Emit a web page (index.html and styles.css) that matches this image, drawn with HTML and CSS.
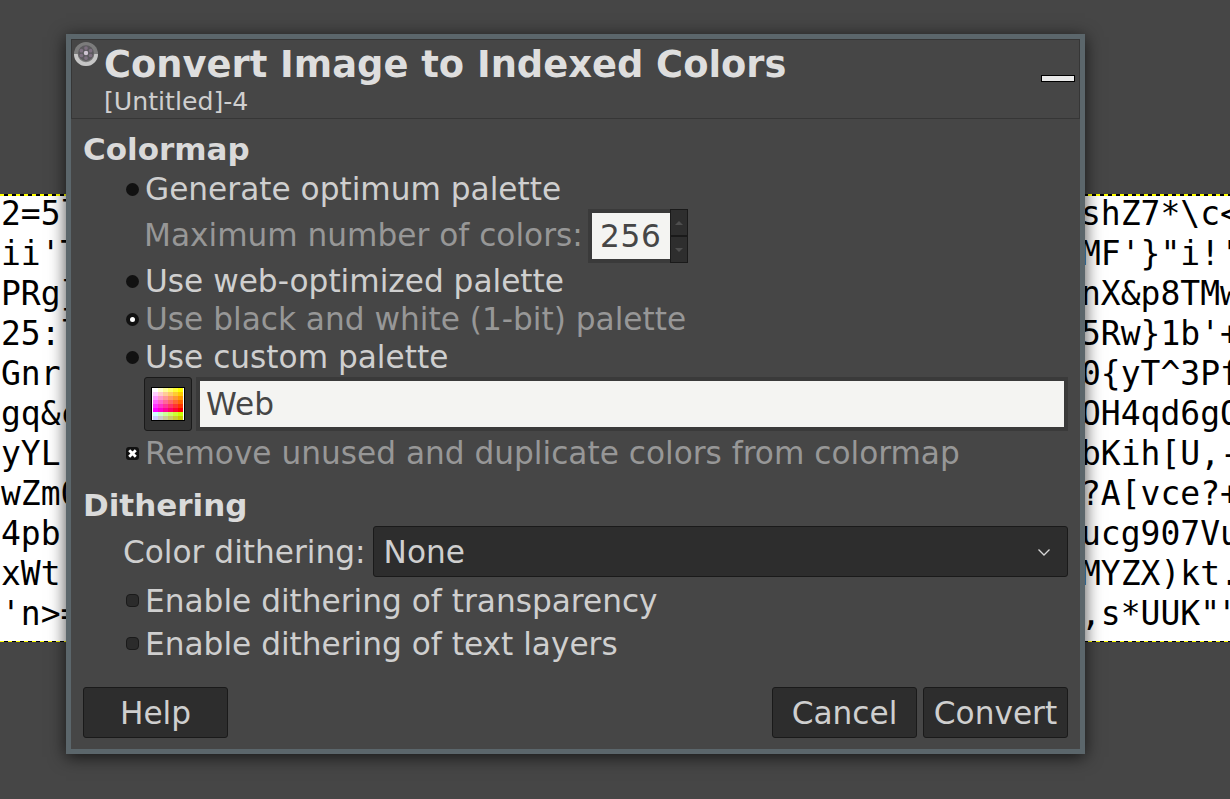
FILE: index.html
```html
<!DOCTYPE html>
<html lang="en">
<head>
    <meta charset="UTF-8">
    <title>Convert Image to Indexed Colors</title>
    <link rel="stylesheet" href="styles.css">
</head>
<body>
    <div class="canvas">
        <pre class="canvas-text canvas-left">2=5l
ii'T
PRg}
25:l
Gnr
gq&amp;c
yYL
wZm0
4pb
xWt
'n&gt;=</pre>
        <pre class="canvas-text canvas-right">shZ7*\c&lt;
MF'}"i!'
nX&amp;p8TMw
5Rw}1b'+
0{yT^3Pf
OH4qd6gO
bKih[U,-
?A[vce?+
ucg907Vu
MYZX)kt.
,s*UUK""</pre>
    </div>

    <div class="dialog">
        <div class="dialog-header">
            <svg class="gimp-icon" width="24" height="24" viewBox="0 0 26 26">
                <circle cx="13" cy="13" r="13" fill="#7c7c7c"/>
                <path d="M0 13a13 13 0 0 0 26 0h-4a9 9 0 0 1-18 0z" fill="#c6c6c6"/>
                <circle cx="13" cy="12" r="8.500" fill="#5c5a5e"/>
                <circle cx="13" cy="12" r="2.400" fill="#cfc4d2"/>
                <circle cx="13" cy="6.600" r="2" fill="#7d6f80"/>
                <circle cx="13" cy="17.400" r="2" fill="#7d6f80"/>
                <circle cx="8" cy="9.400" r="2" fill="#7d6f80"/>
                <circle cx="18" cy="9.400" r="2" fill="#7d6f80"/>
                <circle cx="8" cy="14.600" r="2" fill="#7d6f80"/>
                <circle cx="18" cy="14.600" r="2" fill="#7d6f80"/>
            </svg>
            <div class="header-text">
                <div class="dialog-title">Convert Image to Indexed Colors</div>
                <div class="dialog-subtitle">[Untitled]-4</div>
            </div>
            <div class="minimize"></div>
        </div>

        <div class="dialog-body">
            <h3 class="section-title">Colormap</h3>
            <div class="option option-first"><span class="radio"></span>Generate optimum palette</div>
            <div class="max-row">
                <span class="dim">Maximum number of colors:</span>
                <div class="spin">
                    <div class="spin-value">256</div>
                    <div class="spin-buttons">
                        <div class="spin-btn"><span class="arrow-up"></span></div>
                        <div class="spin-btn"><span class="arrow-down"></span></div>
                    </div>
                </div>
            </div>
            <div class="option"><span class="radio"></span>Use web-optimized palette</div>
            <div class="option dim"><span class="radio radio-on"></span>Use black and white (1-bit) palette</div>
            <div class="option"><span class="radio"></span>Use custom palette</div>
            <div class="palette-row">
                <div class="palette-btn">
                    <svg width="34" height="34" viewBox="0 0 34 34" shape-rendering="crispEdges">
                        <rect width="34" height="34" fill="#000"/>
                        <rect x="1" y="1" width="32" height="32" fill="#fff"/>
                        <g>
                            <rect x="2" y="1" width="5" height="4" fill="#ffffff"/><rect x="7" y="1" width="5" height="4" fill="#ffffcc"/><rect x="12" y="1" width="5" height="4" fill="#ffff99"/><rect x="17" y="1" width="5" height="4" fill="#ffff66"/><rect x="22" y="1" width="5" height="4" fill="#ffff33"/><rect x="27" y="1" width="5" height="4" fill="#ffff00"/>
                            <rect x="2" y="5" width="5" height="4" fill="#ffccff"/><rect x="7" y="5" width="5" height="4" fill="#ffcccc"/><rect x="12" y="5" width="5" height="4" fill="#ffcc99"/><rect x="17" y="5" width="5" height="4" fill="#ffcc66"/><rect x="22" y="5" width="5" height="4" fill="#ffcc33"/><rect x="27" y="5" width="5" height="4" fill="#ffcc00"/>
                            <rect x="2" y="9" width="5" height="4" fill="#ff99ff"/><rect x="7" y="9" width="5" height="4" fill="#ff99cc"/><rect x="12" y="9" width="5" height="4" fill="#ff9999"/><rect x="17" y="9" width="5" height="4" fill="#ff9966"/><rect x="22" y="9" width="5" height="4" fill="#ff9933"/><rect x="27" y="9" width="5" height="4" fill="#ff9900"/>
                            <rect x="2" y="13" width="5" height="4" fill="#ff66ff"/><rect x="7" y="13" width="5" height="4" fill="#ff66cc"/><rect x="12" y="13" width="5" height="4" fill="#ff6699"/><rect x="17" y="13" width="5" height="4" fill="#ff6666"/><rect x="22" y="13" width="5" height="4" fill="#ff6633"/><rect x="27" y="13" width="5" height="4" fill="#ff6600"/>
                            <rect x="2" y="17" width="5" height="4" fill="#ff33ff"/><rect x="7" y="17" width="5" height="4" fill="#ff33cc"/><rect x="12" y="17" width="5" height="4" fill="#ff3399"/><rect x="17" y="17" width="5" height="4" fill="#ff3366"/><rect x="22" y="17" width="5" height="4" fill="#ff3333"/><rect x="27" y="17" width="5" height="4" fill="#ff3300"/>
                            <rect x="2" y="21" width="5" height="4" fill="#ff00ff"/><rect x="7" y="21" width="5" height="4" fill="#ff00cc"/><rect x="12" y="21" width="5" height="4" fill="#ff0099"/><rect x="17" y="21" width="5" height="4" fill="#ff0066"/><rect x="22" y="21" width="5" height="4" fill="#ff0033"/><rect x="27" y="21" width="5" height="4" fill="#ff0000"/>
                            <rect x="2" y="25" width="5" height="4" fill="#ccffff"/><rect x="7" y="25" width="5" height="4" fill="#ccffcc"/><rect x="12" y="25" width="5" height="4" fill="#ccff99"/><rect x="17" y="25" width="5" height="4" fill="#ccff66"/><rect x="22" y="25" width="5" height="4" fill="#ccff33"/><rect x="27" y="25" width="5" height="4" fill="#ccff00"/>
                            <rect x="2" y="29" width="5" height="4" fill="#ccccff"/><rect x="7" y="29" width="5" height="4" fill="#cccccc"/><rect x="12" y="29" width="5" height="4" fill="#cccc99"/><rect x="17" y="29" width="5" height="4" fill="#cccc66"/><rect x="22" y="29" width="5" height="4" fill="#cccc33"/><rect x="27" y="29" width="5" height="4" fill="#cccc00"/>
                        </g>
                    </svg>
                </div>
                <div class="palette-entry"><div class="palette-input">Web</div></div>
            </div>
            <div class="option dim"><span class="check check-on"><svg width="11" height="11" viewBox="0 0 10 10"><path d="M2 2l6 6M8 2l-6 6" stroke="#fff" stroke-width="2.600"/></svg></span>Remove unused and duplicate colors from colormap</div>

            <h3 class="section-title section-second">Dithering</h3>
            <div class="dither-row">
                <span>Color dithering:</span>
                <div class="combo">
                    <span>None</span>
                    <svg width="14" height="14" viewBox="0 0 14 14"><path d="M1.500 4.500l5.500 5.500 5.500-5.500" fill="none" stroke="#d6d6d6" stroke-width="1.300"/></svg>
                </div>
            </div>
            <div class="option option-check"><span class="check"></span>Enable dithering of transparency</div>
            <div class="option option-check"><span class="check"></span>Enable dithering of text layers</div>
        </div>

        <div class="dialog-actions">
            <button class="btn">Help</button>
            <div class="actions-right">
                <button class="btn">Cancel</button>
                <button class="btn">Convert</button>
            </div>
        </div>
    </div>
</body>
</html>
```

FILE: styles.css
```css
html, body {
    height: 100%;
}

body {
    margin: 0;
    overflow: hidden;
    background-color: #464646;
    font-family: "DejaVu Sans", sans-serif;
    font-size: 31.200px;
    color: #cfcfcf;
}

.canvas {
    display: flex;
    justify-content: space-between;
    height: 448px;
    margin-top: 194px;
    background-color: #fff;
    background-image:
        repeating-linear-gradient(90deg, #ff0 0 4px, #000 4px 8px),
        repeating-linear-gradient(90deg, #ff0 0 4px, #000 4px 8px);
    background-size: 100% 2px, 100% 1px;
    background-position: top, bottom;
    background-repeat: no-repeat;
}

.canvas-text {
    margin: 0;
    font-family: "DejaVu Sans Mono", monospace;
    font-size: 33px;
    line-height: 40px;
    color: #000;
}

.canvas-left {
    width: 64px;
    padding-left: 1px;
}

.canvas-right {
    width: 149px;
}

.dialog {
    position: absolute;
    left: 66px;
    top: 34px;
    width: 1019px;
    height: 720px;
    box-sizing: border-box;
    border: 5px solid #5b666b;
    background-color: #464646;
    box-shadow: 0 3px 16px rgba(0, 0, 0, 0.7);
    display: flex;
    flex-direction: column;
}

.dialog-header {
    position: relative;
    height: 80px;
    box-sizing: border-box;
    border: 1px solid #363636;
    padding-left: 32px;
}

.gimp-icon {
    position: absolute;
    left: 2px;
    top: 2px;
}

.dialog-title {
    font-weight: bold;
    font-size: 36.850px;
    line-height: 42px;
    margin-top: 4px;
    color: #dedede;
}

.dialog-subtitle {
    font-size: 25.200px;
    line-height: 32px;
    color: #cfcfcf;
}

.minimize {
    position: absolute;
    right: 4px;
    top: 35px;
    width: 32px;
    height: 5px;
    background-color: #e8e8e8;
    border: 1px solid #000;
}

.dialog-body {
    flex: 1;
    padding: 12px 12px 0 12px;
}

.section-title {
    margin: 0;
    font-size: 31px;
    line-height: 36px;
    font-weight: bold;
    color: #dadada;
}

.section-second {
    margin-top: 15px;
}

.option {
    display: flex;
    align-items: center;
    height: 38px;
    padding-left: 43px;
    white-space: nowrap;
}

.option-first {
    margin-top: 3px;
}

.option-check {
    height: 43px;
}

.dim {
    color: #979797;
}

.radio {
    width: 13px;
    height: 13px;
    margin-right: 6px;
    border-radius: 50%;
    background-color: #111;
    display: flex;
    align-items: center;
    justify-content: center;
}

.radio-on::after {
    content: "";
    width: 5px;
    height: 5px;
    border-radius: 50%;
    background-color: #fff;
}

.check {
    width: 13px;
    height: 13px;
    margin-right: 6px;
    box-sizing: border-box;
    border: 1px solid #1a1a1a;
    border-radius: 4px;
    background-color: #2b2b2b;
    display: flex;
    align-items: center;
    justify-content: center;
}

.check-on {
    border: 0;
    border-radius: 3px;
    background-color: #111;
}

.max-row {
    display: flex;
    align-items: center;
    height: 54px;
    padding-left: 61px;
    white-space: nowrap;
    gap: 5px;
}

.spin {
    display: flex;
    margin-top: 2px;
}

.spin-value {
    width: 78px;
    height: 46px;
    border: 4px solid #3a3a3a;
    border-right: 0;
    background-color: #f4f4f2;
    color: #464646;
    line-height: 46px;
    text-align: center;
    letter-spacing: 0.700px;
}

.spin-buttons {
    display: flex;
    flex-direction: column;
}

.spin-btn {
    width: 18px;
    height: 27px;
    box-sizing: border-box;
    border: 1px solid #1a1a1a;
    background-color: #2e2e2e;
    display: flex;
    align-items: center;
    justify-content: center;
}

.arrow-up {
    border-left: 4px solid transparent;
    border-right: 4px solid transparent;
    border-bottom: 4px solid #4e4e4e;
}

.arrow-down {
    border-left: 4px solid transparent;
    border-right: 4px solid transparent;
    border-top: 4px solid #4e4e4e;
}

.palette-row {
    display: flex;
    align-items: flex-start;
    gap: 4px;
    padding-left: 61px;
    padding-top: 1px;
    height: 57px;
}

.palette-btn {
    width: 48px;
    height: 54px;
    box-sizing: border-box;
    border: 1px solid #1a1a1a;
    border-radius: 3px;
    background-color: #333;
    display: flex;
    align-items: center;
    justify-content: center;
}

.palette-btn svg {
    display: block;
}

.palette-entry {
    flex: 1;
    border: 4px solid #3a3a3a;
}

.palette-input {
    height: 46px;
    line-height: 46px;
    padding-left: 6px;
    background-color: #f4f4f2;
    color: #464646;
}

.dither-row {
    display: flex;
    align-items: center;
    gap: 7px;
    padding-left: 40px;
    margin-top: 3px;
    margin-bottom: 2px;
    white-space: nowrap;
}

.combo {
    flex: 1;
    height: 51px;
    box-sizing: border-box;
    border: 1px solid #1a1a1a;
    border-radius: 3px;
    background-color: #2d2d2d;
    display: flex;
    align-items: center;
    justify-content: space-between;
    padding: 0 16px 0 10px;
}

.dialog-actions {
    display: flex;
    justify-content: space-between;
    padding: 0 12px 11px 12px;
}

.actions-right {
    display: flex;
    gap: 6px;
}

.btn {
    width: 145px;
    height: 51px;
    box-sizing: border-box;
    border: 1px solid #1a1a1a;
    border-radius: 3px;
    background-color: #2d2d2d;
    color: #cfcfcf;
    font-family: inherit;
    font-size: 31.200px;
    padding: 0;
}
```
